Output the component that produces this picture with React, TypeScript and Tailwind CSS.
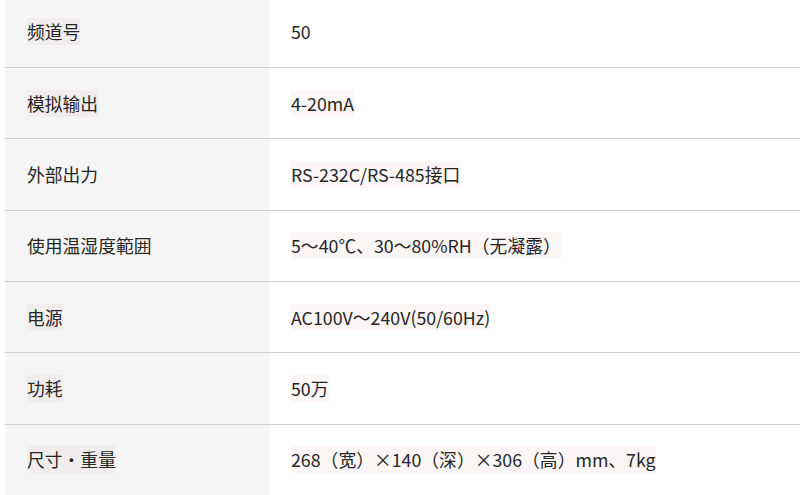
import React from "react";

type Row = { label: string; value: string; hl: [boolean, boolean] };

const rows: Row[] = [
  { label: "频道号", value: "50", hl: [true, false] },
  { label: "模拟输出", value: "4-20mA", hl: [true, true] },
  { label: "外部出力", value: "RS-232C/RS-485接口", hl: [false, true] },
  { label: "使用温湿度範囲", value: "5～40℃、30～80%RH（无凝露）", hl: [false, true] },
  { label: "电源", value: "AC100V～240V(50/60Hz)", hl: [true, true] },
  { label: "功耗", value: "50万", hl: [true, true] },
  { label: "尺寸・重量", value: "268（宽）×140（深）×306（高）mm、7kg", hl: [true, true] },
];

const App: React.FC = () => {
  return (
    <div
      className="w-[800px] h-[495px] overflow-hidden bg-white text-[#262626] text-[17.8px]"
      style={{ fontFamily: '"Noto Sans CJK SC", "Noto Sans", sans-serif' }}
    >
      <div className="ml-[5px] -mt-[3.33px]">
        {rows.map((row) => (
          <div
            key={row.label}
            className="flex h-[71.33px] border-b border-[#cfcfcf]"
          >
            <div className="w-[264px] shrink-0 bg-[#f5f5f5] flex items-center pl-[22px]">
              <span className={row.hl[0] ? "bg-[#f2eded]" : ""}>{row.label}</span>
            </div>
            <div className="flex-1 flex items-center pl-[22px]">
              <span className={row.hl[1] ? "bg-[#fcf6f6]" : ""}>{row.value}</span>
            </div>
          </div>
        ))}
      </div>
    </div>
  );
};

export default App;
